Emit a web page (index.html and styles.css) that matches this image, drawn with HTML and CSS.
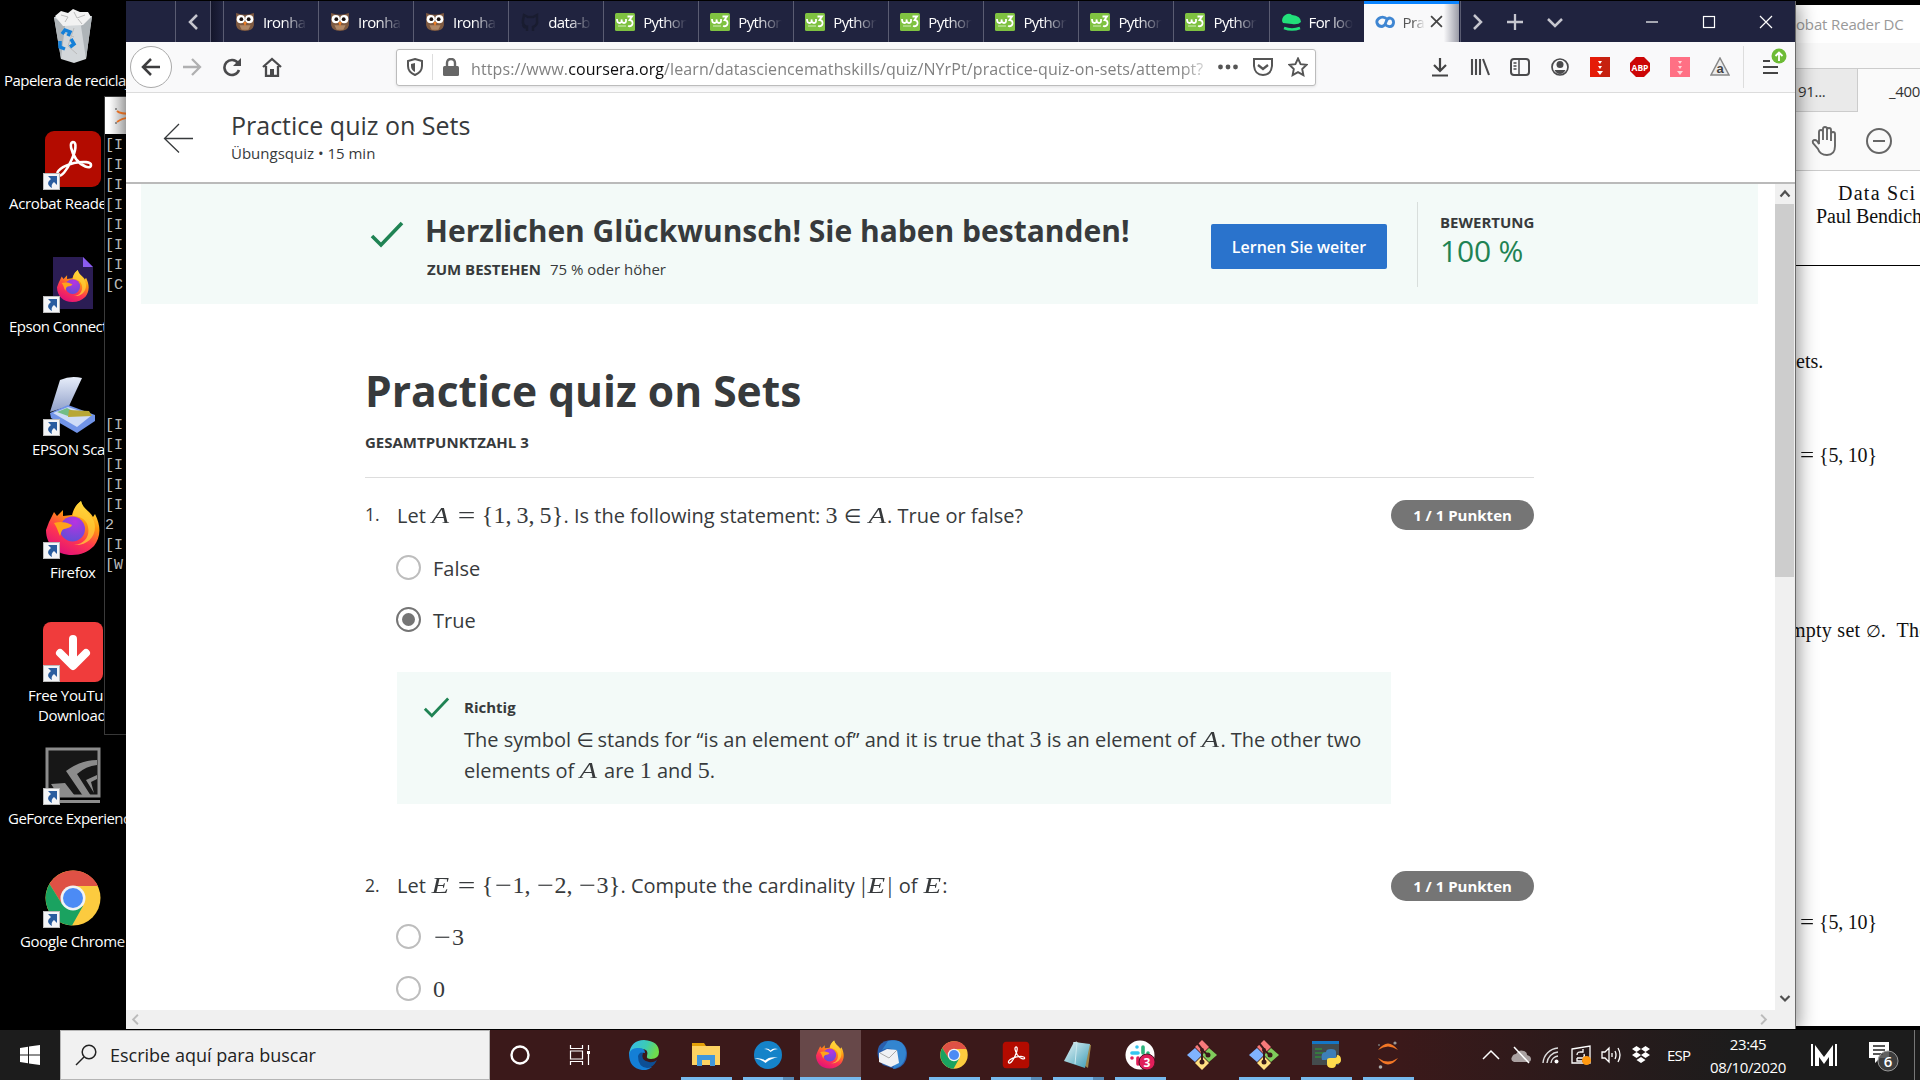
FILE: index.html
```html
<!DOCTYPE html>
<html lang="de">
<head>
<meta charset="utf-8">
<title>Practice quiz on Sets</title>
<link rel="stylesheet" href="styles.css">
</head>
<body>
<svg class="defs" aria-hidden="true">
  <defs>
    <linearGradient id="ffBody" x1=".8" y1="0" x2=".3" y2="1"><stop offset="0" stop-color="#fff44f"/><stop offset=".35" stop-color="#ff980e"/><stop offset=".65" stop-color="#ff3750"/><stop offset="1" stop-color="#e0107a"/></linearGradient>
    <radialGradient id="ffGlobe" cx=".6" cy=".2" r=".9"><stop offset="0" stop-color="#b833e1"/><stop offset="1" stop-color="#5b50d6"/></radialGradient>
    <linearGradient id="edgeA" x1="0" y1="0" x2="1" y2=".3"><stop offset="0" stop-color="#35b8f1"/><stop offset=".6" stop-color="#3ccbb4"/><stop offset="1" stop-color="#6fdc4c"/></linearGradient>
    <linearGradient id="glass" x1="0" y1="0" x2="0" y2="1"><stop offset="0" stop-color="#e8eefa"/><stop offset="1" stop-color="#8f9fc9"/></linearGradient>
    <linearGradient id="note" x1="0" y1="0" x2="1" y2="1"><stop offset="0" stop-color="#e6f5f8"/><stop offset="1" stop-color="#3d9cb5"/></linearGradient>
  </defs>
  <symbol id="firefox" viewBox="0 0 54 54">
    <path d="M3 21 8 11l3 4 6-6v6l9-1C28 6 32 2 35 0c2 8 9 10 12 16l2-3c7 14 5 24-1 32-6 6-13 9-22 9C11 54 0 44 0 29z" fill="url(#ffBody)"/>
    <path d="M35 0c-6 5-8 10-8 15 9 0 14 5 15 11 2 9-3 17-14 18 12 1 21-7 21-18 0-12-12-14-14-26z" fill="#ffd13a" opacity=".75"/>
    <circle cx="26.500" cy="28" r="12.500" fill="url(#ffGlobe)"/>
    <path d="M8 22c5-1 9-2 18 2-1 3-5 3-8 4s-3 5-4 7c-2-4-3-9-6-13z" fill="#ffa31a"/>
  </symbol>
  <symbol id="chrome" viewBox="0 0 56 56">
    <circle cx="28" cy="28" r="27.500" fill="#fccb3f"/>
    <path d="M4.500 14A27.500 27.500 0 0 1 53 16H28L17 34z" fill="#de5145"/>
    <path d="M4.500 14A27.500 27.500 0 0 0 27 55.500L38 36 17 34z" fill="#1aa260"/>
    <circle cx="28" cy="28" r="12.500" fill="#f1f3f4"/><circle cx="28" cy="28" r="10" fill="#4c8bf5"/>
  </symbol>
  <symbol id="acrobat" viewBox="0 0 56 56">
    <rect width="56" height="56" rx="9" fill="#b30b00"/>
    <path d="M13 44c-3-3 4-9 16-12 10-2 17-1 17 2 0 5-10 1-15-6-5-8-7-16-3-17 4 0 3 9-2 19-4 9-10 17-13 14z" fill="none" stroke="#fff" stroke-width="2.600"/>
  </symbol>
  <symbol id="shortcut" viewBox="0 0 17 17"><rect x=".5" y=".5" width="16" height="16" fill="#f4f5f7" stroke="#bbb"/><path d="M5 3h9v9l-3-3c-2 2-3 3-2 6-5-3-5-6-1-9z" fill="#2a5d9f"/></symbol>
  <symbol id="owl" viewBox="0 0 18 18"><path d="M1 1q8 3 16 0v11q-1 5-8 5T1 12z" fill="#7f5a41"/><path d="M4 12h10l-2 4H6z" fill="#b08867"/><circle cx="5.200" cy="6.500" r="3.700" fill="#fff"/><circle cx="12.800" cy="6.500" r="3.700" fill="#fff"/><circle cx="5.700" cy="6.500" r="1.700" fill="#1c1210"/><circle cx="12.300" cy="6.500" r="1.700" fill="#1c1210"/><path d="M7.500 9h3L9 13z" fill="#ef8028"/></symbol>
  <symbol id="w3" viewBox="0 0 20 18"><rect width="20" height="18" rx="1.500" fill="#7fc241"/><path d="M2 6q0 4 2.500 4T6.500 6.500Q6.500 10 9 10t2-4M12.500 3.500H17L14.500 7q3.500.5 3 3.700-.8 3.300-4.500 2.300" fill="none" stroke="#fff" stroke-width="1.800"/><path d="M3 13h8" stroke="#d5edbf"/></symbol>
  <symbol id="check" viewBox="0 0 34 27"><path d="m2 15 9 9L32 2" fill="none" stroke="#1f8354" stroke-width="3.600"/></symbol>
  <symbol id="git" viewBox="0 0 30 30"><path d="m15 0 7 7-7 7-7-7z" fill="#f77a7b"/><path d="m8 8 7 7-7 7-8-7z" fill="#80b3ff"/><path d="m22 8 8 7-8 7-7-7z" fill="#7fcb5b"/><path d="m15 16 7 7-7 7-7-7z" fill="#ffe082"/><path d="m10 3 5 6v12m0-11 6 5" fill="none" stroke="#3a1a1a" stroke-width="2"/><circle cx="15" cy="22" r="2.500" fill="#3a1a1a"/><circle cx="21" cy="15" r="2.500" fill="#3a1a1a"/><circle cx="15" cy="10" r="2" fill="#3a1a1a"/></symbol>
</svg>

<main class="desktop">
  <section class="shortcuts">
    <div class="item l0"><svg class="pic" viewBox="0 0 60 60"><path d="m7 10 38-1-6 43-12 4-13-4z" fill="#d3d7da"/><path d="m7 10 11 9-4 33zM45 9 34 19l5 33z" fill="#aeb4b8"/><path d="m8 9 6-5 7 2 5-4 7 3 8 0 3 5-8 8-20 1z" fill="#f2f2f2"/><path d="m14 8 7 2-3 5m9-10 3 6 8-3m-7 4 4 5m-20 8 12 5m0-9-6 18 9 8" fill="none" stroke="#bbb"/><path d="m15 27 3-4 5 2-2 4m3 3 3 5-4 3m-5 2-5-2v-6" fill="none" stroke="#1580d8" stroke-width="3.500"/></svg><p>Papelera de reciclaje</p></div>
    <div class="item l1"><svg class="pic" viewBox="0 0 60 60"><use href="#acrobat" x="2" y="1" width="56" height="56"/><use href="#shortcut" x="0" y="43" width="17" height="17"/></svg><p>Acrobat Reade</p></div>
    <div class="item l2"><svg class="pic" viewBox="0 0 60 60"><path d="M10 4h30l10 10v42H10z" fill="#2b1d54"/><path d="M40 4v10h10z" fill="#8b5cf0"/><use href="#firefox" x="14" y="16" width="32" height="34"/><use href="#shortcut" x="0" y="43" width="17" height="17"/></svg><p>Epson Connect</p></div>
    <div class="item l3"><svg class="pic" viewBox="0 0 60 60"><path d="M17 4q11-5 22-2L26 30 7 36z" fill="url(#glass)"/><path d="M7 37 25 29l27 10v6L34 57 8 42z" fill="#7194e8"/><path d="m10 37 15-6 24 8-15 12z" fill="#cfdcf7"/><path d="m14 36 10-4 8 4-7 4z" fill="#73bd86"/><path d="m26 34 20 1 3 5-24 1z" fill="#b8a736"/><use href="#shortcut" x="0" y="43" width="17" height="17"/></svg><p>EPSON Scan</p></div>
    <div class="item l4"><svg class="pic" viewBox="0 0 60 60"><use href="#firefox" x="3" y="2" width="54" height="54"/><use href="#shortcut" x="0" y="43" width="17" height="17"/></svg><p>Firefox</p></div>
    <div class="item l5"><svg class="pic" viewBox="0 0 60 60"><rect width="60" height="60" rx="8" fill="#f03c3c"/><path d="M30 17v25M17 31l13 13 13-13" fill="none" stroke="#fff" stroke-width="8" stroke-linecap="round" stroke-linejoin="round"/><use href="#shortcut" x="0" y="43" width="17" height="17"/></svg><p>Free YouTube<br><span class="second">Download</span></p></div>
    <div class="item l6"><svg class="pic" viewBox="0 0 60 60"><rect x="4" y="4" width="52" height="47" fill="#171717" stroke="#8c8c8c" stroke-width="3"/><path d="M4 56.500h53" stroke="#8c8c8c" stroke-width="3"/><path d="M54 15Q38 15 23 26l17 25h8L34 29q9-8 20-9zM54 30l-11 5 8 13-3-11 6-3zM8 39l14-1 10 13H16z" fill="#8c8c8c"/><use href="#shortcut" x="0" y="43" width="17" height="17"/></svg><p>GeForce Experience</p></div>
    <div class="item l7"><svg class="pic" viewBox="0 0 60 60"><use href="#chrome" x="2" y="2" width="56" height="56"/><use href="#shortcut" x="0" y="43" width="17" height="17"/></svg><p>Google Chrome</p></div>
  </section>

  <section class="terminal">
    <div class="terminal-title"><svg width="20" height="20" viewBox="0 0 20 20"><path d="M3 5q3 3 16 3M3 16q6-5 16-4" fill="none" stroke="#f37726" stroke-width="1.800"/><circle cx="2" cy="3" r="1" fill="#777"/><circle cx="2" cy="17" r="1" fill="#777"/></svg></div>
<pre>[I
[I
[I
[I
[I
[I
[I
[C






[I
[I
[I
[I
[I
2
[I
[W</pre>
  </section>

  <section class="reader">
    <div class="reader-title">obat Reader DC</div>
    <div class="reader-menu"></div>
    <div class="reader-tabs"><span class="rt-off">91...</span><span class="rt-on">_400</span></div>
    <div class="reader-tools">
      <svg width="28" height="30" viewBox="0 0 28 30"><path d="M8 18V6q0-2 2-2t2 2v8V3q0-2 2-2t2 2v11V4q0-2 2-2t2 2v11V8q0-2 2-2t2 2v12q0 9-8 9-7 0-9-6L2 17q-1-3 2-3 2 0 4 4z" fill="none" stroke="#666" stroke-width="1.900"/></svg>
      <svg width="28" height="28" viewBox="0 0 28 28"><circle cx="14" cy="14" r="12" fill="none" stroke="#666" stroke-width="2"/><path d="M8 14h12" stroke="#666" stroke-width="2"/></svg>
    </div>
    <div class="reader-page">
      <p class="doc d1">Data Sci</p>
      <p class="doc d2">Paul Bendich</p>
      <div class="doc-rule"></div>
      <p class="doc d3">ets.</p>
      <p class="doc d4"><span class="wide">=</span>{5, 10}</p>
      <p class="doc d5">mpty set <span class="empty">∅</span>. &nbsp;The</p>
      <p class="doc d6"><span class="wide">=</span>{5, 10}</p>
    </div>
  </section>

  <section class="browser">
    <header class="tabs">
      <div class="pad0"></div>
      <div class="scroll-left"><svg width="12" height="18" viewBox="0 0 12 18"><path d="M10 2 3 9l7 7" fill="none" stroke="#c6c6cf" stroke-width="2.500"/></svg></div>
      <div class="pad1"></div>
      <div class="tab"><svg class="fav"><use href="#owl"/></svg><span>Ironha</span></div>
      <div class="tab"><svg class="fav"><use href="#owl"/></svg><span>Ironha</span></div>
      <div class="tab"><svg class="fav"><use href="#owl"/></svg><span>Ironha</span></div>
      <div class="tab"><svg class="fav" viewBox="0 0 20 20"><path d="M7 19v-4q-3 1-4-2m4 2q-5-2-4-7l1-5 4 2h5l4-2v5q1 5-4 7v4" fill="none" stroke="#191c30" stroke-width="2.500"/></svg><span>data-b</span></div>
      <div class="tab"><svg class="fav"><use href="#w3"/></svg><span>Python</span></div>
      <div class="tab"><svg class="fav"><use href="#w3"/></svg><span>Python</span></div>
      <div class="tab"><svg class="fav"><use href="#w3"/></svg><span>Python</span></div>
      <div class="tab"><svg class="fav"><use href="#w3"/></svg><span>Python</span></div>
      <div class="tab"><svg class="fav"><use href="#w3"/></svg><span>Python</span></div>
      <div class="tab"><svg class="fav"><use href="#w3"/></svg><span>Python</span></div>
      <div class="tab"><svg class="fav"><use href="#w3"/></svg><span>Python</span></div>
      <div class="tab"><svg class="fav" viewBox="0 0 20 20"><path d="M1 9q0-5 5-7 3-1 5 1 9 1 9 7-3 3-9 2l-9-1z" fill="#22e07a"/><path d="M3 16q8 3 16 0" fill="none" stroke="#22e07a" stroke-width="2.500"/></svg><span>For loo</span></div>
      <div class="tab active"><svg class="fav" viewBox="0 0 20 20"><path d="M12.500 7.500Q9 4 5.500 5.500 1 7.500 2 11t5 3.500Q10 14 11 10T15 6q4 1 3.500 5T14 14.500q-2 0-4-2.500" fill="none" stroke="#3f86d2" stroke-width="2.800"/></svg><span>Pra</span><svg class="tab-x" viewBox="0 0 12 12"><path d="m1 1 10 10M11 1 1 11" stroke="#444" stroke-width="1.600"/></svg></div>
      <div class="tab-tools">
        <svg viewBox="0 0 20 20"><path d="m6 3 7 7-7 7" fill="none" stroke="#c6c6cf" stroke-width="2.500"/></svg>
        <svg viewBox="0 0 20 20"><path d="M10 2v16M2 10h16" stroke="#c6c6cf" stroke-width="2.300"/></svg>
        <svg viewBox="0 0 20 20"><path d="m3 7 7 7 7-7" fill="none" stroke="#c6c6cf" stroke-width="2.500"/></svg>
      </div>
      <div class="caption">
        <svg viewBox="0 0 14 14"><path d="M1 7h12" stroke="#fff" stroke-width="1.200"/></svg>
        <svg viewBox="0 0 14 14"><rect x="1.500" y="1.500" width="11" height="11" fill="none" stroke="#fff" stroke-width="1.200"/></svg>
        <svg viewBox="0 0 14 14"><path d="m1 1 12 12M13 1 1 13" stroke="#fff" stroke-width="1.200"/></svg>
      </div>
    </header>

    <div class="toolbar">
      <div class="nav">
        <span class="back"><svg viewBox="0 0 20 20"><path d="M19 10H2m8-8-8 8 8 8" fill="none" stroke="#3d3d3f" stroke-width="2.500"/></svg></span>
        <svg viewBox="0 0 20 20"><path d="M1 10h17m-8-8 8 8-8 8" fill="none" stroke="#b0b0b1" stroke-width="2.300"/></svg>
        <svg viewBox="0 0 20 20"><path d="M17 13a7.500 7.500 0 1 1-1-7" fill="none" stroke="#4a4a4c" stroke-width="2.600"/><path d="M19 1v8h-8z" fill="#4a4a4c"/></svg>
        <svg viewBox="0 0 20 20"><path d="m1 10 9-8 9 8M4 9v10h12V9" fill="none" stroke="#4a4a4c" stroke-width="2.300"/><path d="M8 12h4v7H8z" fill="#4a4a4c"/></svg>
      </div>
      <div class="urlbar">
        <svg class="u-shield" viewBox="0 0 16 18"><path d="M8 1 15 3v5q0 6-7 9-7-3-7-9V3z" fill="none" stroke="#555" stroke-width="2"/><path d="M8 5v9q-4-2-4-6V6z" fill="#555"/></svg>
        <i class="u-sep"></i>
        <svg class="u-lock" viewBox="0 0 16 18"><rect y="8" width="16" height="10" rx="1.500" fill="#666"/><path d="M4 9V5q0-4 4-4t4 4v4" fill="none" stroke="#666" stroke-width="2.400"/></svg>
        <span class="url">https://www.<b>coursera.org</b>/learn/datasciencemathskills/quiz/NYrPt/practice-quiz-on-sets/attempt?</span>
        <svg class="u-dots" viewBox="0 0 20 20"><circle cx="2.500" cy="10" r="2.400" fill="#555"/><circle cx="10" cy="10" r="2.400" fill="#555"/><circle cx="17.500" cy="10" r="2.400" fill="#555"/></svg>
        <svg class="u-pocket" viewBox="0 0 20 20"><path d="M1 2h18v7q-1 9-9 9T1 9z" fill="none" stroke="#555" stroke-width="2"/><path d="m5 8 5 4 5-4" fill="none" stroke="#555" stroke-width="2.300"/></svg>
        <svg class="u-star" viewBox="0 0 20 20"><path d="m10 1.500 2.600 5.600 6 .7-4.400 4.200 1.200 6.200L10 15.200l-5.400 3 1.200-6.200L1.400 7.800l6-.7z" fill="none" stroke="#555" stroke-width="1.900"/></svg>
      </div>
      <div class="ext">
        <svg viewBox="0 0 20 20"><path d="M10 1v12M4 8l6 6 6-6M2 18.500h16" fill="none" stroke="#444" stroke-width="2.200"/></svg>
        <svg viewBox="0 0 20 20"><path d="M2 2v16M6 2v16M10 2v16M13 2l6 16" stroke="#4a4a4c" stroke-width="2.100"/></svg>
        <svg viewBox="0 0 20 20"><rect x="1" y="2" width="18" height="16" rx="3" fill="none" stroke="#4a4a4c" stroke-width="2"/><path d="M9 2v16M3.500 6h3m-3 3h3m-3 3h3" stroke="#4a4a4c" stroke-width="1.500"/></svg>
        <svg viewBox="0 0 20 20"><circle cx="10" cy="10" r="8" fill="none" stroke="#4a4a4c" stroke-width="1.700"/><circle cx="10" cy="7.500" r="3.500" fill="#4a4a4c"/><path d="M4.500 13h11q-2 4-5.500 4t-5.500-4z" fill="#4a4a4c"/></svg>
        <svg viewBox="0 0 20 20"><path d="M0 0h20v20H0z" fill="#e51c08"/><path d="M10 0h10v20H10z" fill="#b52515" opacity=".65"/><path d="M8 4h4l-2 3zM8 9h4l-2 3zM7 14h6l-3 4z" fill="#fff"/></svg>
        <svg viewBox="0 0 20 20"><path d="M6 0h8l6 6v8l-6 6H6l-6-6V6z" fill="#cc0606"/><text x="10" y="13.500" text-anchor="middle" class="abp">ABP</text></svg>
        <svg viewBox="0 0 20 20"><path d="M0 0h20v20H0z" fill="#ff7084"/><path d="M8 4h4l-2 3zM8 9h4l-2 3zM7 14h6l-3 4z" fill="#ffd5da"/></svg>
        <svg viewBox="0 0 20 20"><path d="M10 1 19 18H1z" fill="#ececec" stroke="#888" stroke-width="1.500"/><text x="10" y="16" text-anchor="middle" class="ga">a</text></svg>
      </div>
      <div class="menu"><svg viewBox="0 0 26 28"><path d="M1 13h7M1 19h15M1 25h15" stroke="#444" stroke-width="2.200"/><circle cx="17" cy="8" r="7.500" fill="#6dbb35"/><path d="M17 13V5m-3.500 3L17 4.500 20.500 8" fill="none" stroke="#fff" stroke-width="1.800"/></svg></div>
    </div>

    <div class="page">
      <div class="course-bar">
        <svg width="30" height="30" viewBox="0 0 30 30"><path d="M30 15.500H1.500M16 1 1.500 15.500 16 29.500" fill="none" stroke="#373a3c" stroke-width="1.300"/></svg>
        <div class="cb-text"><div class="cb-title">Practice quiz on Sets</div><div class="cb-sub">Übungsquiz • 15 min</div></div>
      </div>
      <div class="viewport">
        <div class="content">
          <div class="banner">
            <svg class="b-check"><use href="#check"/></svg>
            <div class="b-text"><h2>Herzlichen Glückwunsch! Sie haben bestanden!</h2><p><b>ZUM BESTEHEN</b>75 % oder höher</p></div>
            <button class="btn">Lernen Sie weiter</button>
            <div class="grade"><b>BEWERTUNG</b><span>100 %</span></div>
          </div>
          <div class="quiz">
            <h1>Practice quiz on Sets</h1>
            <div class="total">GESAMTPUNKTZAHL 3</div>
            <div class="question">
              <span class="num">1.</span>
              <div class="q-body">
                <p class="prompt">Let <span class="m"><i>A</i><u>=</u><s>{</s>1<q>,</q>3<q>,</q>5<s>}</s></span><span class="dot">.</span> Is the following statement: <span class="m">3<em>∈</em><i>A</i></span>. True or false?</p>
                <div class="option"><span class="radio"></span>False</div>
                <div class="option"><span class="radio on"></span>True</div>
                <div class="feedback">
                  <svg><use href="#check"/></svg>
                  <div><b>Richtig</b><p>The symbol <span class="m"><em class="tight">∈</em></span> stands for “is an element of” and it is true that <span class="m">3</span> is an element of <span class="m"><i>A</i></span>. The other two<br>elements of <span class="m"><i>A</i></span> are <span class="m">1</span> and <span class="m">5</span>.</p></div>
                </div>
              </div>
              <span class="pill">1 / 1 Punkten</span>
            </div>
            <div class="question second-q">
              <span class="num">2.</span>
              <div class="q-body">
                <p class="prompt">Let <span class="m"><i>E</i><u>=</u><s>{</s><var>−</var>1<q>,</q><var>−</var>2<q>,</q><var>−</var>3<s>}</s></span><span class="dot">.</span> Compute the cardinality <span class="m"><s class="bar">|</s><i>E</i><s class="bar">|</s></span> of <span class="m"><i>E</i></span>:</p>
                <div class="option"><span class="radio"></span><span class="m"><var>−</var>3</span></div>
                <div class="option"><span class="radio"></span><span class="m">0</span></div>
              </div>
              <span class="pill">1 / 1 Punkten</span>
            </div>
          </div>
        </div>
        <div class="vscroll"><svg viewBox="0 0 20 20"><path d="m5.500 12.500 4.500-5 4.500 5" fill="none" stroke="#505050" stroke-width="2.200"/></svg><i></i><svg class="down" viewBox="0 0 20 20"><path d="m5.500 8 4.500 4.500L14.500 8" fill="none" stroke="#505050" stroke-width="2.200"/></svg></div>
      </div>
      <div class="hscroll"><svg viewBox="0 0 20 20"><path d="m12 5-5 5 5 5" fill="none" stroke="#bbb" stroke-width="2"/></svg><svg viewBox="0 0 20 20"><path d="m7 5 5 5-5 5" fill="none" stroke="#bbb" stroke-width="2"/></svg><i></i></div>
    </div>
  </section>
</main>

<footer class="taskbar">
  <div class="start"><svg width="20" height="20" viewBox="0 0 20 20"><path d="m0 3 8-1.200v7.700H0zM9 1.600 20 0v9.500H9zM0 10.500h8v7.700L0 17zM9 10.500h11V20L9 18.400z" fill="#fff"/></svg></div>
  <div class="search"><svg width="22" height="22" viewBox="0 0 22 22"><circle cx="14" cy="8" r="6.800" fill="none" stroke="#222" stroke-width="1.500"/><path d="m9 13-8 8" stroke="#222" stroke-width="1.500"/></svg><span>Escribe aquí para buscar</span></div>
  <div class="apps">
    <div class="app sys"><svg viewBox="0 0 30 30"><circle cx="15" cy="15" r="8.500" fill="none" stroke="#fff" stroke-width="2.400"/></svg></div>
    <div class="app sys"><svg viewBox="0 0 30 30"><path d="M5.500 5v3.500h12V5m-12 20v-3.500h12V25M5.500 11h12v8h-12zM23.500 5v5m0 4v11" fill="none" stroke="#fff" stroke-width="1.200"/><path d="M22 11h3v3h-3z" fill="#fff"/></svg></div>
    <div class="app"><svg viewBox="0 0 30 30"><path d="M0 14Q2 0 15 0q15 1 15 12 0 7-8 7-5 0-4-3 2-7-5-7Q4 8 0 16z" fill="url(#edgeA)"/><path d="M0 14Q2 7 10 8q6 0 6 5-5-1-6 4 0 12 13 10-5 4-10 3Q0 28 0 14z" fill="#147fd6"/><path d="M9 16q2-5 5-3-3 7 6 9 4 1 8-2-4 8-10 8-9-1-9-12z" fill="#0d4f95"/></svg></div>
    <div class="app run"><svg viewBox="0 0 30 30"><path d="M1 3h12l2 3H1z" fill="#e3a008"/><path d="M1 6h28v19H1z" fill="#fdd262"/><path d="M6 26V15h18v11h-5v-6h-8v6z" fill="#3f97dc"/></svg></div>
    <div class="app run multi"><svg viewBox="0 0 30 30"><circle cx="15" cy="15" r="14" fill="#1583c9"/><path d="M11 9q4-1.500 6.500 1.500Q20 7.500 25 9q-4 0-7.500 3Q15 9 11 9zM1.500 18.500q7-1 10.500 2 4-4.500 13-3-7 .5-12.500 5.500-4-4-11-4.500z" fill="#fff"/></svg></div>
    <div class="app run current"><svg viewBox="0 0 30 30"><use href="#firefox" x="1" width="28" height="29"/></svg></div>
    <div class="app"><svg viewBox="0 0 30 30"><path d="M2 6Q6 0 15 0q14 1 15 13 0 13-12 16l-12-4Q-1 18 1 9z" fill="#2a5fae"/><path d="M11 1q16-4 18 11 0 14-13 17 5-12 1-18-4-5-12-1z" fill="#3385d0"/><path d="m2 13 8-4 10 1 2 13-8 4-12-5z" fill="#f0f2f5"/><path d="m3 13 9 5 8-8" fill="none" stroke="#aaa"/></svg></div>
    <div class="app run"><svg viewBox="0 0 30 30"><use href="#chrome" x="1" y="1" width="28" height="28"/></svg></div>
    <div class="app run multi"><svg viewBox="0 0 30 30"><use href="#acrobat" x="1.500" y="1.500" width="27" height="27"/></svg></div>
    <div class="app run multi"><svg viewBox="0 0 30 30"><path d="m12 2 16 3-3 23-3-2z" fill="#9d854a"/><path d="m11 2 16 2-5 24L1 21z" fill="url(#note)"/><path d="m10 3 4-1-2 22" fill="none" stroke="#cdeaf0"/></svg></div>
    <div class="app run"><svg viewBox="0 0 30 30"><circle cx="15" cy="15" r="14.500" fill="#fff"/><g stroke-width="3.600" stroke-linecap="round"><path d="M7 13h6M12 7h0" stroke="#36c5f0"/><path d="M18 7v6M23 13h0" stroke="#2eb67d"/><path d="M7 18h0M13 18v6" stroke="#e01e5a"/></g><circle cx="22" cy="22" r="8" fill="#e01e5a" stroke="#4b1525"/><text x="22" y="26.500" text-anchor="middle" class="badge3">3</text></svg></div>
    <div class="app"><svg viewBox="0 0 30 30"><use href="#git"/></svg></div>
    <div class="app run"><svg viewBox="0 0 30 30"><use href="#git"/></svg></div>
    <div class="app run"><svg viewBox="0 0 30 30"><path d="M1 1h27v24H1z" fill="#444b4d"/><path d="M1 1h27v3H1z" fill="#1476c6"/><path d="M4 9h7M4 13h10M4 17h6" stroke="#338a3b" stroke-width="1.400"/><path d="M15 20h-4q-2-8 4-8 0-3 5-3 5 0 5 3v5q0 2-3 2h-5z" fill="#3d7fb8"/><path d="M16 24v-4q0-2 3-2h5q2 0 2-3 4 0 4 5 0 4-5 4 0 4-4 4-5 0-5-4z" fill="#ffdb4d"/></svg></div>
    <div class="app run"><svg viewBox="0 0 30 30"><path d="M5 10q10-13 20 0-10-7-20 0zM5 18q10 7 20 0-10 13-20 0z" fill="#f37726"/><circle cx="22" cy="3" r="1.600" fill="#999"/><circle cx="6" cy="5" r="1" fill="#777"/><circle cx="7.500" cy="27" r="1.800" fill="#aaa"/></svg></div>
  </div>
  <div class="tray">
    <svg viewBox="0 0 20 20"><path d="m2 14 8-8 8 8" fill="none" stroke="#fff" stroke-width="1.500"/></svg>
    <svg viewBox="0 0 20 20"><path d="M3 17q-4-2-2-5 1-3 4-3 3-5 8-3 3 1 3 4 4 1 4 4t-3 3z" fill="#aaa1a1"/><path d="m3 2 15 16" stroke="#fff" stroke-width="1.500"/></svg>
    <svg viewBox="0 0 20 20"><path d="M2 18A16 16 0 0 1 17 3M6 18A12 12 0 0 1 17 7M10 18a8 8 0 0 1 7-7" fill="none" stroke="#ddd" stroke-width="1.400"/><circle cx="15.500" cy="16.500" r="2" fill="#fff"/></svg>
    <svg viewBox="0 0 20 20"><path d="m1 4 18-3v17H1z" fill="none" stroke="#fff" stroke-width="1.300"/><path d="M6 10q0-4 6-3V4m0 3H9m-3 6h6q2-1 1-4m-7 4v3h5" fill="none" stroke="#fff" stroke-width="1.300"/><circle cx="15.500" cy="15.500" r="4.500" fill="#ff9810"/></svg>
    <svg viewBox="0 0 20 20"><path d="M1 7h3l4-4v14l-4-4H1zM11 8v4m3-6q2 4 0 8m3-11q4 7 0 14" fill="none" stroke="#fff" stroke-width="1.300"/></svg>
    <svg viewBox="0 0 20 20"><path d="m5.500 1 4.500 3-4.500 3L1 4zM14.500 1 19 4l-4.500 3L10 4zM5.500 7l4.500 3-4.500 3L1 10zM14.500 7l4.500 3-4.500 3-4.500-3zM10 12l4.500 3-4.500 3-4.500-3z" fill="#fff"/></svg>
    <span class="lang">ESP</span>
    <div class="clock"><span>23:45</span><span>08/10/2020</span></div>
    <svg class="mlogo" viewBox="0 0 26 22"><path d="M0 0h2v22H0zM24 0h2v22h-2zM4 22V1l9 12 9-12v21h-4v-9l-5 7-5-7v9z" fill="#fff"/></svg>
    <svg class="notif" viewBox="0 0 32 32"><path d="M1 1h20v16h-9l-5 5v-5H1z" fill="#fff"/><path d="M5 5h12M5 9h12M5 13h10" stroke="#222" stroke-width="1.500"/><circle cx="20" cy="20" r="10" fill="#444" fill-opacity=".85" stroke="#999"/><text x="20" y="25.500" text-anchor="middle" class="badge6">6</text></svg>
    <i class="peek"></i>
  </div>
</footer>
</body>
</html>
```
FILE: styles.css
```css
* { box-sizing: border-box; }
body { margin: 0; width: 1920px; height: 1080px; overflow: hidden; background: #000; font-family: "Open Sans", "Noto Sans", sans-serif; color: #373a3c; display: flex; flex-direction: column; }
p, h1, h2, pre { margin: 0; }
svg { display: block; flex: none; }
.defs { position: absolute; width: 0; height: 0; }
.desktop { position: relative; height: 1030px; flex: none; overflow: hidden; }

/* desktop shortcuts */
.shortcuts { display: flex; flex-direction: column; width: 146px; }
.item { height: 123px; padding-top: 7px; color: #fff; font-size: 15px; line-height: 20px; letter-spacing: -.35px; white-space: nowrap; }
.pic { width: 60px; height: 60px; margin: 0 0 3px 43px; }
.l0 .pic { margin-left: 47px; }
.l0 p { padding-left: 4px; letter-spacing: -.53px; }
.l1 p { padding-left: 9px; }
.l2 p { padding-left: 9px; letter-spacing: -.5px; }
.l3 p { padding-left: 32px; }
.l4 p { padding-left: 50px; }
.l5 p { padding-left: 28px; }
.l6 p { padding-left: 8px; letter-spacing: -.5px; }
.l7 p { padding-left: 20px; }
.second { padding-left: 10px; }

/* console */
.terminal { position: absolute; left: 104px; top: 96px; width: 500px; height: 639px; background: #000; border: 1px solid #3a3a3a; color: #c4c4c4; }
.terminal-title { height: 37px; background: linear-gradient(90deg, #fff 4px, #bbb 24px); padding: 9px 0 0 9px; }
.terminal pre { font: 15px/20px "Liberation Mono", monospace; padding: 2px 0 0 0; }

/* document viewer */
.reader { position: absolute; left: 1700px; top: 5px; width: 220px; height: 1021px; background: #fff; overflow: hidden; padding-left: 96px; }
.reader-title { height: 38px; font-size: 15px; line-height: 38px; color: #999; white-space: nowrap; letter-spacing: -.15px; }
.reader-menu { height: 26px; background: #f9f9f9; border-bottom: 1px solid #ccc; }
.reader-tabs { display: flex; height: 43px; font-size: 15px; line-height: 45px; letter-spacing: -.3px; background: #fafafa; color: #333; }
.rt-off { width: 65px; padding-left: 2px; background: #eaeaea; border-right: 1px solid #ccc; border-bottom: 1px solid #ccc; }
.rt-on { padding-left: 31px; }
.reader-tools { display: flex; align-items: center; gap: 26px; height: 59px; padding-left: 15px; background: #fafafa; border-bottom: 1px solid #ccc; }
.reader-page { display: flex; flex-direction: column; font-family: "Liberation Serif", serif; font-size: 20px; line-height: 24px; color: #111; white-space: nowrap; }
.doc { height: 24px; }
.d1 { margin-top: 10px; padding-left: 42px; letter-spacing: 1.250px; }
.d2 { margin-top: -1px; padding-left: 20px; letter-spacing: -.1px; }
.doc-rule { height: 1px; background: #000; margin-top: 37px; }
.d3 { margin-top: 83px; }
.d4 { margin-top: 70px; padding-left: 4px; letter-spacing: -.2px; }
.d5 { margin-top: 151px; margin-left: -6px; letter-spacing: .25px; }
.d6 { margin-top: 268px; padding-left: 4px; letter-spacing: -.2px; }
.wide { display: inline-block; width: 19px; transform: scaleX(1.25); transform-origin: 0 50%; }
.empty { font-size: 17px; }

/* browser window */
.browser { position: absolute; left: 126px; top: 1px; width: 1670px; height: 1028px; background: #fff; border-right: 1px solid #6b6b6b; box-shadow: 2px 2px 18px rgba(0,0,0,.45); display: flex; flex-direction: column; }
.tabs { display: flex; height: 41px; flex: none; background: #20233f; color: #fff; font-size: 15px; letter-spacing: -.6px; }
.pad0 { width: 50px; border-right: 1px solid #5a5c72; }
.scroll-left { width: 35px; display: flex; align-items: center; justify-content: center; border-right: 1px solid #5a5c72; }
.pad1 { width: 12px; background: linear-gradient(90deg, #14162b, #20233f); }
.tab { width: 95.050px; flex: none; border-left: 1px solid #5a5c72; display: flex; align-items: center; padding-left: 11px; }
.fav { width: 20px; height: 20px; }
.tab span { width: 44px; margin-left: 8px; overflow: hidden; white-space: nowrap; line-height: 41px; padding-top: 2px; -webkit-mask-image: linear-gradient(90deg, #000 45%, transparent 100%); mask-image: linear-gradient(90deg, #000 45%, transparent 100%); }
.tab.active { background: linear-gradient(90deg, #f9f9fa 84%, #9a9ba6); color: #555; border-left: 0; border-top: 3px solid #0a84ff; padding-left: 11px; }
.tab.active span { width: 22px; margin-top: -3px; }
.tab.active .fav, .tab-x { margin-top: -3px; }
.tab-x { width: 13px; height: 13px; margin-left: 5px; }
.tab-tools { display: flex; align-items: center; gap: 20px; padding-left: 7px; border-left: 1px solid #5a5c72; margin-left: 1px; flex: 1; }
.tab-tools svg { width: 20px; height: 20px; }
.tab-tools svg:first-child { margin-right: -3px; }
.caption { display: flex; align-items: center; gap: 43px; padding-right: 22px; }
.caption svg { width: 14px; height: 14px; }

.toolbar { display: flex; align-items: center; height: 51px; flex: none; background: #f9f9fa; border-bottom: 1px solid #dcdcdc; }
.nav { display: flex; align-items: center; width: 270px; padding-left: 4px; flex: none; }
.nav svg { width: 20px; height: 20px; margin-left: 20px; }
.nav > svg:nth-child(2) { margin-left: 10px; }
.back { width: 42px; height: 42px; border: 1px solid #aaa; border-radius: 50%; display: flex; align-items: center; justify-content: center; background: #fff; }
.back svg { margin: 0; }
.urlbar { display: flex; align-items: center; width: 920px; height: 37px; background: #fff; border: 1px solid #bcbcbc; border-radius: 3px; font-size: 16px; color: #818181; box-shadow: 0 1px 3px rgba(0,0,0,.1); flex: none; }
.u-shield { width: 16px; height: 18px; margin-left: 10px; }
.u-sep { width: 1px; height: 26px; background: #ddd; margin: 0 10px 0 9px; }
.u-lock { width: 16px; height: 18px; margin-right: 12px; }
.url { width: 738px; white-space: nowrap; overflow: hidden; letter-spacing: .1px; line-height: 30px; padding-top: 3px; -webkit-mask-image: linear-gradient(90deg, #000 96%, transparent 101%); mask-image: linear-gradient(90deg, #000 96%, transparent 101%); }
.url b { font-weight: 400; color: #0c0c0d; }
.u-dots, .u-pocket, .u-star { width: 20px; height: 20px; margin-left: 9px; }
.u-pocket, .u-star { margin-left: 15px; }
.ext { display: flex; gap: 20px; margin-left: 114px; }
.ext svg { width: 20px; height: 20px; }
.abp { font: bold 8.500px "Open Sans", sans-serif; fill: #fff; }
.ga { font: bold 13px "Liberation Sans", sans-serif; fill: #444; }
.menu { height: 42px; border-left: 1px solid #ddd; margin-left: 13px; padding-left: 18px; }
.menu svg { width: 26px; height: 28px; margin-top: 2px; }

.page { flex: 1; display: flex; flex-direction: column; min-height: 0; }
.course-bar { display: flex; align-items: center; gap: 38px; height: 91px; flex: none; padding-left: 37px; border-bottom: 2px solid #bababa; }
.cb-text { padding-top: 4px; }
.cb-title { font-size: 25px; line-height: 30px; margin-top: -4px; }
.cb-sub { font-size: 15px; line-height: 24px; padding-top: 1px; }
.viewport { display: flex; height: 826px; }
.content { flex: 1; overflow: hidden; padding: 0 17px 0 15px; }
.banner { display: flex; height: 120px; background: #f3faf8; }
.b-check { width: 34px; height: 27px; margin: 37px 21px 0 229px; }
.b-text { width: 786px; }
.b-text h2 { font-size: 30px; line-height: 40px; margin-top: 27px; }
.b-text p { font-size: 15px; line-height: 24px; margin: 6px 0 0 2px; }
.b-text p b { margin-right: 9px; }
.btn { width: 176px; height: 45px; margin-top: 40px; padding: 0; border: 0; border-radius: 2px; background: #2a73cc; color: #fff; font: 600 16px "Open Sans", sans-serif; }
.grade { margin: 18px 0 0 30px; height: 85px; padding: 8px 0 0 22px; border-left: 1px solid #d8dedc; display: flex; flex-direction: column; }
.grade b { font-size: 15px; line-height: 24px; }
.grade span { font-size: 30px; line-height: 34px; color: #1f8354; letter-spacing: -.2px; }

.quiz { width: 1169px; margin-left: 224px; }
h1 { font-size: 42.550px; line-height: 60px; padding-top: 57px; }
.total { font-size: 15px; font-weight: 700; line-height: 20px; margin-top: 11px; padding-bottom: 25px; border-bottom: 1px solid #ddd; }
.question { display: grid; grid-template-columns: 32px 994px 143px; padding-top: 22px; align-items: start; }
.second-q { padding-top: 67px; }
.num { font-size: 17.500px; line-height: 28px; }
.prompt { font-size: 20px; line-height: 31px; height: 41px; white-space: nowrap; }
.second-q .prompt { margin-top: -1px; }
.pill { height: 30px; border-radius: 15px; background: #757575; color: #fff; font-size: 15px; font-weight: 700; line-height: 31px; text-align: center; }
.option { display: flex; align-items: center; height: 52px; font-size: 20px; padding-top: 3px; }
.second-q .option { height: 51.500px; }
.option .m { margin-top: -2px; }
.radio { width: 25px; height: 25px; border: 2px solid #bdbdbd; border-radius: 50%; margin: -3px 12px 0 -1px; flex: none; display: flex; align-items: center; justify-content: center; }
.radio.on { border-color: #757575; }
.radio.on::after { content: ""; width: 13px; height: 13px; border-radius: 50%; background: #757575; }
.feedback { display: flex; height: 132px; margin-top: 27px; padding: 24px 0 0 26px; background: #f3faf8; }
.feedback svg { width: 27px; height: 21px; margin: 1px 14px 0 0; }
.feedback b { display: block; font-size: 15px; line-height: 24px; margin: -1px 0 5px; }
.feedback p { font-size: 20px; line-height: 31px; white-space: nowrap; }

/* inline maths */
.m { font-family: "Liberation Serif", serif; font-size: 24px; line-height: 20px; display: inline-flex; align-items: baseline; }
.m i { display: inline-block; width: 19.500px; padding-left: 1px; transform: scaleX(1.2); transform-origin: 15% 50%; }
.m u { display: inline-block; width: 31px; text-align: center; text-decoration: none; transform: scaleX(1.3); }
.m s { display: inline-block; width: 12px; text-align: center; text-decoration: none; }
.m s.bar { width: 7px; }
.m q { display: inline-block; width: 11px; quotes: none; }
.m q::before, .m q::after { content: none; }
.m var { display: inline-block; width: 19px; font-style: normal; text-align: center; transform: scaleX(1.25); }
.m em { display: inline-block; width: 30px; font: 20px/20px "DejaVu Sans", sans-serif; text-align: center; }
.m em.tight { width: 16px; }

.vscroll { width: 20px; background: #f0f0f0; display: flex; flex-direction: column; }
.vscroll svg { width: 20px; height: 20px; }
.vscroll i { width: 19px; height: 373px; background: #cdcdcd; }
.vscroll .down { margin-top: auto; margin-bottom: 2px; }
.hscroll { display: flex; justify-content: space-between; height: 19px; background: #f0f0f0; }
.hscroll svg { width: 20px; height: 19px; }
.hscroll svg:nth-child(2) { margin-left: auto; }
.hscroll i { width: 21px; }

/* taskbar */
.taskbar { display: flex; height: 50px; background: linear-gradient(90deg, #1c1c1c 60px, #3b191a 490px, #3b191a 1400px, #1c1c1c 1740px); color: #fff; }
.start { width: 60px; display: flex; align-items: center; justify-content: center; }
.search { width: 430px; display: flex; align-items: center; gap: 13px; padding-left: 14px; background: #f1f1f1; border: 1px solid #b5b5b5; color: #222; font-size: 18px; }
.apps { display: flex; }
.app { width: 62px; height: 50px; display: flex; justify-content: center; align-items: center; position: relative; }
.app.sys { width: 60px; }
.app.sys + .app:not(.sys) { margin-left: 3px; }
.app svg { width: 30px; height: 30px; }
.run::after { content: ""; position: absolute; left: 6px; bottom: 0; width: 51px; height: 3px; background: #76b9ed; }
.multi::after { background: linear-gradient(90deg, #76b9ed 40px, #5689b5 40px); }
.current { background: linear-gradient(#674849, #674849) 1px 0 / 61px 50px no-repeat; }
.current::after { left: 1px; width: 61px; }
.badge3 { font: bold 12px "Open Sans", sans-serif; fill: #fff; }
.tray { display: flex; align-items: center; margin-left: auto; gap: 10px; font-size: 15px; }
.tray svg { width: 20px; height: 20px; }
.lang { margin-left: 6px; letter-spacing: -.8px; width: 25px; }
.clock { display: flex; flex-direction: column; width: 78px; align-items: center; line-height: 23px; margin: 1px 0 0 7px; letter-spacing: -.38px; }
.tray .mlogo { width: 26px; height: 22px; margin-left: 14px; }
.tray .notif { width: 32px; height: 32px; margin: 4px 0 0 21px; }
.badge6 { font: 600 15px "Open Sans", sans-serif; fill: #fff; }
.peek { width: 1px; height: 50px; background: #777; margin: 0 5px 0 4px; }
```
